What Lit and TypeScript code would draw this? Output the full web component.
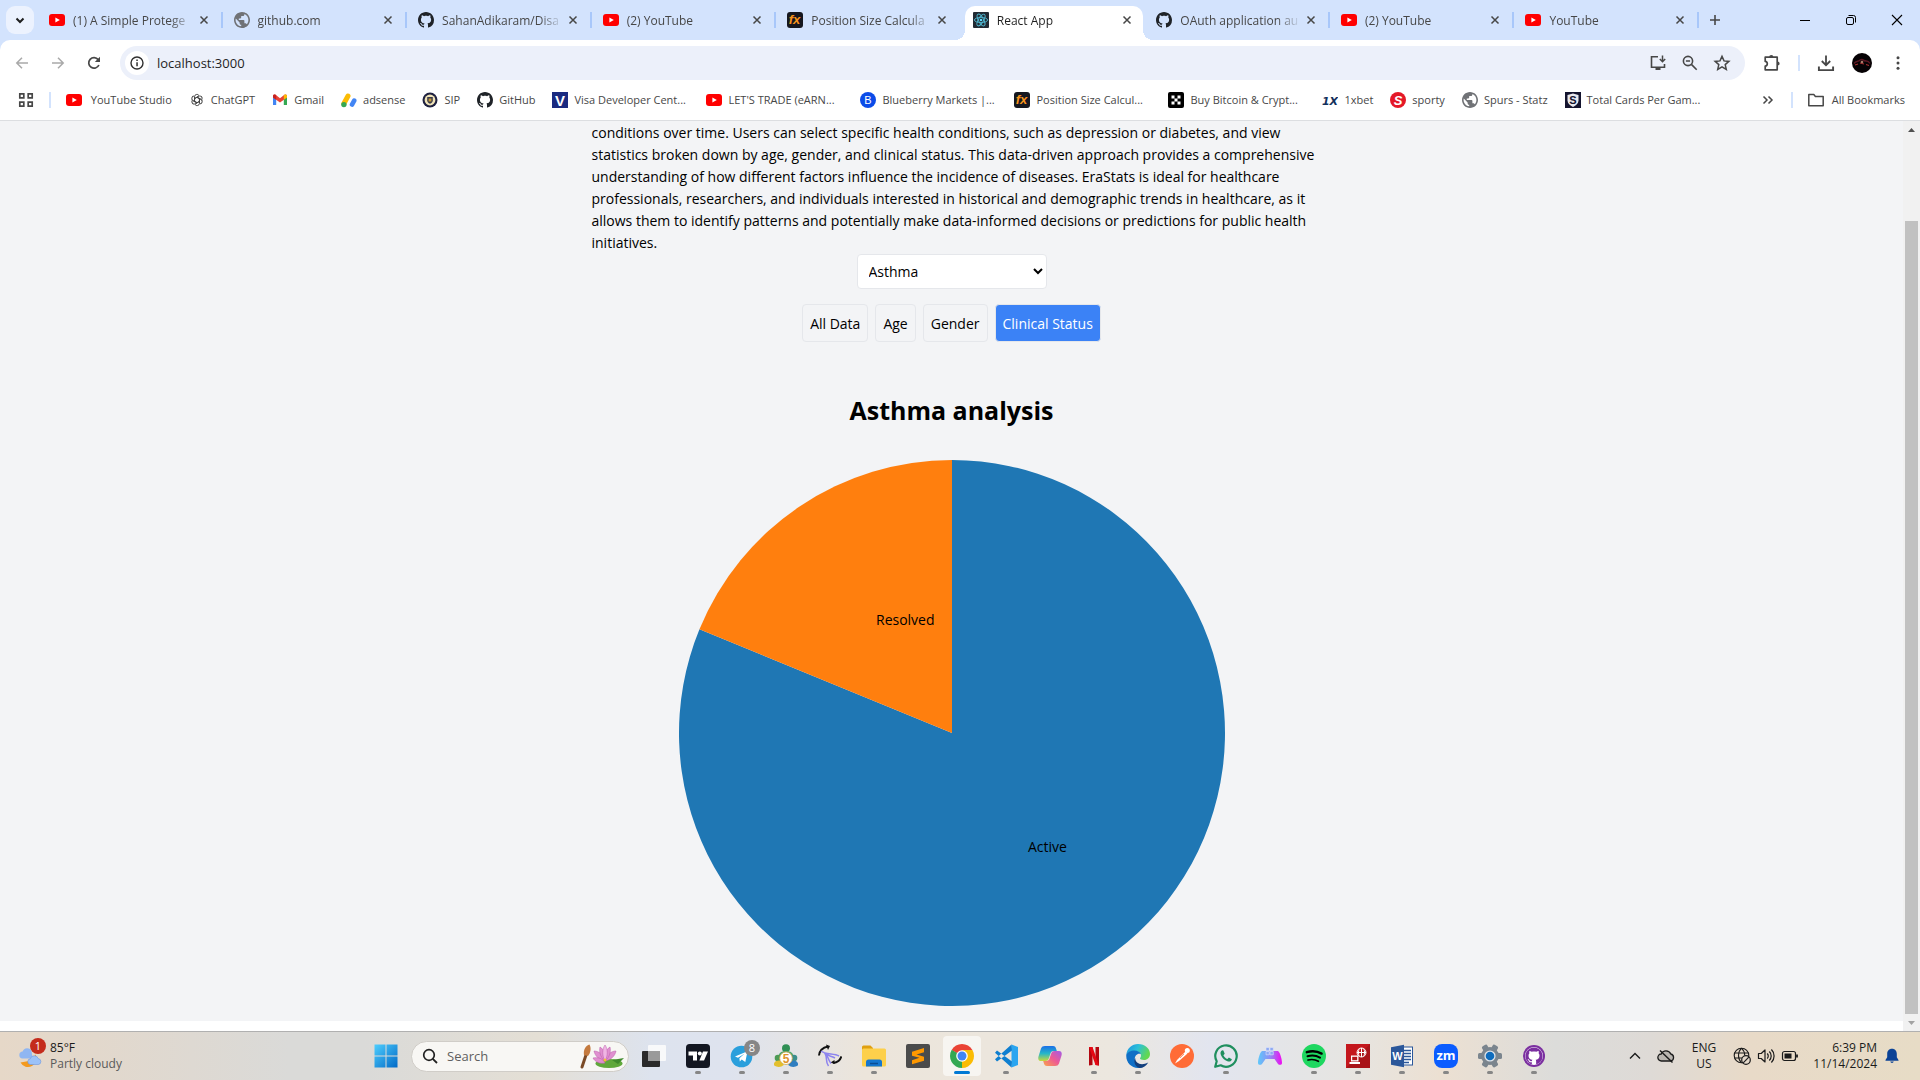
import { LitElement, html, svg, css, SVGTemplateResult } from "lit";
import { customElement, property, state } from "lit/decorators.js";
import { classMap } from "lit/directives/class-map.js";

type Art = { box: number; art: SVGTemplateResult };

const OCTOCAT =
  "M8 0C3.58 0 0 3.58 0 8c0 3.54 2.29 6.53 5.47 7.59.4.07.55-.17.55-.38 0-.19-.01-.82-.01-1.49-2.01.37-2.53-.49-2.69-.94-.09-.23-.48-.94-.82-1.13-.28-.15-.68-.52-.01-.53.63-.01 1.08.58 1.23.82.72 1.21 1.87.87 2.33.66.07-.52.28-.87.51-1.07-1.78-.2-3.64-.89-3.64-3.95 0-.87.31-1.59.82-2.15-.08-.2-.36-1.02.08-2.12 0 0 .67-.21 2.2.82.64-.18 1.32-.27 2-.27.68 0 1.36.09 2 .27 1.53-1.04 2.2-.82 2.2-.82.44 1.1.16 1.92.08 2.12.51.56.82 1.27.82 2.15 0 3.07-1.87 3.75-3.65 3.95.29.25.54.73.54 1.48 0 1.07-.01 1.93-.01 2.2 0 .21.15.46.55.38A8.013 8.013 0 0016 8c0-4.42-3.58-8-8-8z";

const stroke = (d: string, width = 1.6, color = "#474747") =>
  svg`<path d=${d} fill="none" stroke=${color} stroke-width=${width}/>`;

const ICONS: Record<string, Art> = {
  /* ---- site icons ---- */
  youtube: {
    box: 16,
    art: svg`<rect x="0" y="2" width="16" height="12" rx="3" fill="#f00"/><path d="M6.4 5.4v5.2L10.8 8z" fill="#fff"/>`,
  },
  globe: {
    box: 20,
    art: svg`<path transform="translate(-2 -2)" fill="#707276" d="M12 2C6.48 2 2 6.48 2 12s4.48 10 10 10 10-4.48 10-10S17.52 2 12 2zm-1 17.93c-3.95-.49-7-3.85-7-7.93 0-.62.08-1.21.21-1.79L9 15v1c0 1.1.9 2 2 2v1.93zm6.9-2.54c-.26-.81-1-1.39-1.9-1.39h-1v-3c0-.55-.45-1-1-1H8v-2h2c.55 0 1-.45 1-1V7h2c1.1 0 2-.9 2-2v-.41c2.93 1.19 5 4.06 5 7.41 0 2.08-.8 3.97-2.1 5.390z"/>`,
  },
  github: { box: 16, art: svg`<path d=${OCTOCAT} fill="#1f2328"/>` },
  fx: {
    box: 16,
    art: svg`<rect width="16" height="16" rx="3" fill="#15171f"/><text x="7.500" y="12" text-anchor="middle" font-family="Liberation Sans, sans-serif" font-style="italic" font-weight="700" font-size="13" fill="#f7941d">fx</text>`,
  },
  react: {
    box: 16,
    art: svg`<rect width="16" height="16" rx="1" fill="#222a33"/><g fill="none" stroke="#4fb7d0" stroke-width=".9"><ellipse cx="8" cy="8" rx="6.6" ry="2.6"/><ellipse cx="8" cy="8" rx="6.6" ry="2.6" transform="rotate(60 8 8)"/><ellipse cx="8" cy="8" rx="6.6" ry="2.6" transform="rotate(120 8 8)"/></g><circle cx="8" cy="8" r="1.3" fill="#61dafb"/>`,
  },
  openai: {
    box: 18,
    art: svg`<g fill="none" stroke="#444" stroke-width="1.100" transform="translate(1 1)">${[0, 60, 120, 180, 240, 300].map(
      (a) => svg`<path transform="rotate(${a} 8 8)" d="M5.2 9.6V4.3A2.7 2.7 0 0 1 10.2 3M5.4 6.4l3.8-2.2"/>`
    )}</g>`,
  },
  gmail: {
    box: 16,
    art: svg`<path d="M1 3.8v9.2h3.2V7.2z" fill="#4285f4"/><path d="M15 3.8v9.2h-3.2V7.2z" fill="#34a853"/><path d="M1 4c0-1.6 1.6-2 2.6-1.2L8 6.2l4.4-3.4C13.4 2 15 2.4 15 4v1.4L8 10.6 1 5.4z" fill="#ea4335"/><path d="M11.8 3.3l.6-.5C13.4 2 15 2.4 15 4v1.4l-3.2 2.4z" fill="#fbbc04"/><path d="M1 4c0-1.6 1.6-2 2.6-1.2l.6.5v4.5L1 5.4z" fill="#c5221f"/>`,
  },
  adsense: {
    box: 16,
    art: svg`<path d="M2.9 11.500L7 4" stroke="#fbbc04" stroke-width="5" stroke-linecap="round"/><path d="M11 12.6l2.2-4" stroke="#4285f4" stroke-width="4.6" stroke-linecap="round"/><circle cx="2.9" cy="12.6" r="2.7" fill="#34a853"/>`,
  },
  sip: {
    box: 16,
    art: svg`<circle cx="8" cy="8" r="7.5" fill="#1e2140"/><circle cx="8" cy="8" r="5.4" fill="#efe3b8"/><path d="M5.2 5h5.6v3.5c0 1.6-1.4 2.6-2.8 3.2-1.4-.6-2.8-1.6-2.8-3.2z" fill="#3a3a4a"/><path d="M6.6 6.5h2.8v3H6.6z" fill="#c59a3b"/>`,
  },
  visa: {
    box: 16,
    art: svg`<rect width="16" height="16" fill="#1a2a80"/><text x="8" y="13.5" text-anchor="middle" font-family="Liberation Sans, sans-serif" font-weight="700" font-size="15" fill="#fff">V</text>`,
  },
  blueberry: {
    box: 16,
    art: svg`<circle cx="8" cy="8" r="8" fill="#0b4be8"/><text x="8" y="12" text-anchor="middle" font-family="Liberation Sans, sans-serif" font-size="11" fill="#fff">B</text>`,
  },
  okx: {
    box: 16,
    art: svg`<rect width="16" height="16" rx="2" fill="#000"/><path d="M3.5 3.5h3v3h-3zM9.5 3.5h3v3h-3zM6.5 6.5h3v3h-3zM3.5 9.5h3v3h-3zM9.5 9.5h3v3h-3z" fill="#fff"/>`,
  },
  onex: {
    box: 16,
    art: svg`<text x="8" y="12.5" text-anchor="middle" font-family="DejaVu Sans, sans-serif" font-style="italic" font-weight="700" font-size="11" fill="#12305c">1X</text>`,
  },
  sporty: {
    box: 16,
    art: svg`<circle cx="8" cy="8" r="8" fill="#e41827"/><text x="8" y="12.5" text-anchor="middle" font-family="Liberation Sans, sans-serif" font-style="italic" font-weight="700" font-size="13" fill="#fff">S</text>`,
  },
  total: {
    box: 16,
    art: svg`<rect width="16" height="16" fill="#14142e"/><path d="M8 1.5l5.5 1.5v5.5c0 3-2.5 5-5.5 6.5-3-1.5-5.5-3.5-5.5-6.5V3z" fill="#e9e9ee"/><text x="8" y="12" text-anchor="middle" font-family="Liberation Sans, sans-serif" font-weight="700" font-size="11" fill="#14142e">S</text>`,
  },

  /* ---- browser controls ---- */
  caret: { box: 16, art: stroke("M4.5 6.5L8 10l3.5-3.5", 2, "#1f1f1f") },
  close: { box: 16, art: stroke("M4.5 4.5l7 7M11.5 4.5l-7 7", 1.5) },
  plus: { box: 16, art: stroke("M8 3v10M3 8h10", 1.6) },
  minimize: { box: 16, art: stroke("M3 8.5h10", 1, "#000") },
  restore: {
    box: 16,
    art: svg`<rect x="3.5" y="5.5" width="7" height="7" rx="1.5" fill="none" stroke="#000"/><path d="M5.5 3.5h5a2 2 0 0 1 2 2v5" fill="none" stroke="#000"/>`,
  },
  winclose: { box: 16, art: stroke("M3 3l10 10M13 3L3 13", 1.1, "#000") },
  back: { box: 16, art: stroke("M14 8H3M8 2.8L2.8 8 8 13.2", 1.5, "#a9a9a9") },
  forward: { box: 16, art: stroke("M2 8h11M8 2.8L13.2 8 8 13.2", 1.5, "#a9a9a9") },
  reload: {
    box: 16,
    art: svg`${stroke("M12.9 10A5.3 5.3 0 1 1 12.2 4.6L13.2 6", 1.7)}<path d="M14 1.8v5.2H8.8z" fill="#474747"/>`,
  },
  info: {
    box: 16,
    art: svg`<circle cx="8" cy="8" r="6" fill="none" stroke="#303030" stroke-width="1.4"/><path d="M7.3 7.2h1.5v4H7.3zM7.3 4.6h1.5v1.5H7.3z" fill="#303030"/>`,
  },
  install: {
    box: 18,
    art: svg`${stroke("M9 2.8H2.5v10.4h13V10", 1.6)}<path d="M6.5 13h5v3h-5z" fill="#474747"/>${stroke("M13.5 1.5v6M10.8 5l2.7 2.7L16.2 5", 1.5)}`,
  },
  zoomout: {
    box: 18,
    art: svg`<circle cx="7" cy="7" r="4.6" fill="none" stroke="#474747" stroke-width="1.6"/>${stroke("M10.4 10.4l5.3 5.3M4.9 7h4.2", 1.6)}`,
  },
  star: {
    box: 18,
    art: svg`<path d="M9 2.4l2 4.5 4.9.5-3.7 3.2 1.1 4.8L9 12.9l-4.3 2.5 1.1-4.8-3.7-3.2L7 6.9z" fill="none" stroke="#474747" stroke-width="1.5"/>`,
  },
  puzzle: {
    box: 18,
    art: svg`<path d="M2.2 3.2h12v12.600H2.200v-3.600c2.800-.2 2.800-4.600 0-4.800z" fill="none" stroke="#474747" stroke-width="1.7" stroke-linejoin="round"/><path d="M6.200 3a2.100 2.100 0 0 1 4.200 0zM14.500 7.400a2.100 2.100 0 0 1 0 4.200z" fill="#474747"/>`,
  },
  download: { box: 18, art: svg`${stroke("M9 1.5v9.5M4.8 7L9 11.2 13.2 7", 1.8)}${stroke("M1.9 12.5v3.6h14.2v-3.6", 1.9)}` },
  avatar: {
    box: 20,
    art: svg`<circle cx="10" cy="10" r="10" fill="#060204"/><path d="M2 10.5c2-3 5-1.500 6-3.5 1.500-1 3-.5 4 .5 2 1.200 4-.5 6 3" fill="none" stroke="#5a1722" stroke-width="1.500"/><path d="M3 12l3-1M14 11.500l3 1M8 10l4 1" stroke="#a83030" stroke-width="1.100"/><circle cx="10" cy="9" r="1.300" fill="#a77a68"/>`,
  },
  dots: {
    box: 16,
    art: svg`<circle cx="8" cy="2.8" r="1.5" fill="#474747"/><circle cx="8" cy="8" r="1.5" fill="#474747"/><circle cx="8" cy="13.2" r="1.5" fill="#474747"/>`,
  },
  apps: {
    box: 16,
    art: svg`<path d="M1.8 1.8h4v4h-4zM10.2 1.8h4v4h-4zM1.8 10.2h4v4h-4zM10.2 10.2h4v4h-4z" fill="none" stroke="#474747" stroke-width="1.7"/>`,
  },
  more: { box: 16, art: stroke("M3.5 4.5L7 8l-3.5 3.5M8.5 4.5L12 8l-3.5 3.5", 1.5) },
  folder: {
    box: 16,
    art: svg`<path d="M.8 2.6h5l1.6 1.900h7.800v9.300H.8z" fill="none" stroke="#474747" stroke-width="1.5" stroke-linejoin="round"/>`,
  },

  /* ---- taskbar ---- */
  weather: {
    box: 26,
    art: svg`<path d="M2.500 19.500a8 8 0 1 0 15-8l-4 6z" fill="#f49a1e"/><path d="M4 15.500a3.500 3.500 0 0 1 .6-6.900 4.800 4.800 0 0 1 9-.3l1 7.200z" fill="#8fb6f2"/><path d="M12 21.500a2.900 2.900 0 0 1 .3-5.700 4.200 4.200 0 0 1 8-.2 3 3 0 0 1 .2 5.900z" fill="#9cc2f8" stroke="#6d97e0" stroke-width=".6"/>`,
  },
  windows: {
    box: 24,
    art: svg`<defs><linearGradient id="w" gradientUnits="userSpaceOnUse" x1="0" y1="0" x2="24" y2="24"><stop offset="0" stop-color="#4fd0ff"/><stop offset="1" stop-color="#0067c5"/></linearGradient></defs><path d="M.5.5h11v11H.5zM12.5.5h11v11h-11zM.5 12.5h11v11H.5zM12.5 12.5h11v11h-11z" fill="url(#w)"/>`,
  },
  search: { box: 16, art: svg`<circle cx="7" cy="7" r="5.3" fill="none" stroke="#202020" stroke-width="1.7"/>${stroke("M10.8 10.8l4.2 4.2", 1.8, "#202020")}` },
  lotus: {
    box: 46,
    art: svg`<path d="M4 34L8 22" stroke="#7a4a26" stroke-width="3" stroke-linecap="round"/><path d="M6 22c-1-5 2-10 5.500-10.500C13.500 15 12.500 20 10 23z" fill="#c47a3e"/><ellipse cx="31" cy="30.500" rx="13.500" ry="4.500" fill="#5fa83a"/><path d="M34 27l12-2-6 6z" fill="#3f8a2c"/><g fill="#e08fd0" stroke="#b85aa8" stroke-width=".5"><path d="M27 28c-6-1-10-5-11-10 5 0 10 4 11 10z"/><path d="M27 28c6-1 10-5 11-10-5 0-10 4-11 10z"/><path d="M27 28c-5-4-6-10-5-14 5 3 6 9 5 14z"/><path d="M27 28c5-4 6-10 5-14-5 3-6 9-5 14z"/><path d="M27 28c-3-5-3-12 0-16 3 4 3 11 0 16z" fill="#f0b5e4"/><path d="M27 30c-5 1-10-1-12-5 4-1 10 0 12 5z"/></g><circle cx="27" cy="27" r="1.500" fill="#f2c230"/>`,
  },
  taskview: {
    box: 24,
    art: svg`<rect x="0" y="7" width="18" height="16" rx="1" fill="#2a2a2a"/><rect x="6" y="1" width="18" height="16" rx="1" fill="#fbfbfb" opacity=".9"/><rect x="6" y="7" width="12" height="10" fill="#9a9a9a"/>`,
  },
  tradingview: {
    box: 24,
    art: svg`<rect width="24" height="24" rx="3.5" fill="#131722"/><path d="M2.5 7.5h8.5v9H7v-5H2.5z" fill="#fff"/><circle cx="13.8" cy="9.5" r="2" fill="#fff"/><path d="M17 7.5h5l-4 9h-4.6z" fill="#fff"/>`,
  },
  telegram: {
    box: 24,
    art: svg`<circle cx="11.5" cy="12.5" r="10.8" fill="#2a9fdc"/><path d="M5 12.5L17.5 7.3l-2.2 10.8-3.6-2.6-1.9 1.9-.4-3.2 5-4.5-6.4 4z" fill="#fff"/>`,
  },
  money: {
    box: 24,
    art: svg`<circle cx="12" cy="4.200" r="4" fill="#2f8f55"/><path d="M4.500 13c0-4 3-6 7.500-6s7.500 2 7.500 6v2h-15z" fill="#4aa56c"/><circle cx="4" cy="14" r="3.300" fill="#4c9a55"/><path d="M-.2 21c0-3 2-4.500 5-4.500s5 1.500 5 4.500c-3 2.500-7 2.500-10 0z" fill="#e3bf2c"/><circle cx="20" cy="14" r="3.300" fill="#3b8f8c"/><path d="M14.200 21c0-3 2-4.500 5-4.500s5 1.500 5 4.500c-3 2.500-7 2.500-10 0z" fill="#2f7ec0"/><circle cx="12" cy="14.200" r="6.300" fill="#fff" stroke="#d0a545" stroke-width=".8"/><text x="12" y="18.500" text-anchor="middle" font-family="Liberation Sans, sans-serif" font-weight="700" font-size="12" fill="#e0942a">5</text>`,
  },
  swirl: {
    box: 24,
    art: svg`<path d="M1 11.500C1.500 7 5 3.500 10 2.500" fill="none" stroke="#111" stroke-width="2"/><path d="M8 .5l4 1.500L10 6z" fill="#111"/><path d="M23.200 12.500c-.5 3.500-4 6-8 6.500" fill="none" stroke="#111" stroke-width="2"/><path d="M16.500 16l-4 2.500 4 1.500z" fill="#111"/><path d="M3 7c5 4 13 2 18 5M5.500 8c5 3.500 1 9 5 14M6 8.500c5 3.500 3 6 7 11M8 9.500c3 3 4 2 9 4.500" fill="none" stroke="#8d84ee" stroke-width="1.500"/>`,
  },
  explorer: {
    box: 24,
    art: svg`<path d="M0 3a1.500 1.500 0 0 1 1.500-1.500h7L11 4v4H0z" fill="#e0a010"/><rect x="0" y="4.500" width="24" height="18" rx="1.500" fill="#fdd04b"/><path d="M4 22.500V18a2.500 2.500 0 0 1 2.500-2.500h11A2.500 2.500 0 0 1 20 18v4.500z" fill="#1577cf"/><path d="M8 19.500h8" stroke="#0b4e94" stroke-width="1.500"/>`,
  },
  sublime: {
    box: 24,
    art: svg`<rect width="24" height="24" rx="2" fill="#4b4b4b"/><path d="M6 7.800L18 4v4.200l-7.500 2.300L18 12.800v3.900L6 20.300v-4.100l7.500-2.400L6 11.800z" fill="#ff9800"/>`,
  },
  chrome: {
    box: 24,
    art: svg`<path d="M12 12L1.61 6A12 12 0 0 1 22.39 6z" fill="#ea4335"/><path d="M12 12L22.39 6A12 12 0 0 1 12 24z" fill="#fbbc04"/><path d="M12 12V24A12 12 0 0 1 1.61 6z" fill="#34a853"/><path d="M12 6h10.390L17.500 14z" fill="#fbbc04"/><path d="M1.610 6l5.200 9L12 12z" fill="#34a853"/><path d="M12 24l5.200-9L12 12z" fill="#fbbc04"/><circle cx="12" cy="12" r="5.800" fill="#fff"/><circle cx="12" cy="12" r="4.500" fill="#4285f4"/>`,
  },
  vscode: {
    box: 24,
    art: svg`<path d="M17.500.5L24 3v18l-6.500 2.500z" fill="#2aa5f0"/><path d="M17.500.5L1 15.200l2 2.300L18 6.500zM1 8.800l2-2.300L18 17.500l-.5 6z" fill="#0f7fd0"/>`,
  },
  copilot: {
    box: 24,
    art: svg`<defs><linearGradient id="ca" x1="0" y1="0" x2="0" y2="1"><stop offset="0" stop-color="#1a6fe8"/><stop offset=".5" stop-color="#27b6c9"/><stop offset="1" stop-color="#c9d93a"/></linearGradient><linearGradient id="cb" x1="1" y1="0" x2="0" y2="1"><stop offset="0" stop-color="#a35be8"/><stop offset=".5" stop-color="#ee5a94"/><stop offset="1" stop-color="#f9a54a"/></linearGradient></defs><path d="M7 2h8c2 0 2.6 1 3.2 3l.6 2h-3c-2 0-3 1-3.5 3L11 14c-.6 2-1.5 3-3.5 3H3C.6 17-.2 15 .5 12.5l2.5-8C3.6 2.8 5 2 7 2z" fill="url(#ca)"/><path d="M17 22H9c-2 0-2.6-1-3.2-3l-.6-2h3c2 0 3-1 3.5-3L13 10c.6-2 1.5-3 3.5-3H21c2.4 0 3.2 2 2.5 4.5l-2.5 8c-.6 1.7-2 2.5-4 2.5z" fill="url(#cb)"/>`,
  },
  netflix: {
    box: 24,
    art: svg`<path d="M7 3h3.5v18L7 21.5zM13.5 3H17v18.5l-3.5-.5z" fill="#b20710"/><path d="M7 3h3.5L17 21.5l-3.5-.5z" fill="#e50914"/>`,
  },
  edge: {
    box: 24,
    art: svg`<defs><linearGradient id="ea" x1="0" y1="0" x2="1" y2=".4"><stop offset="0" stop-color="#1a8fe0"/><stop offset=".5" stop-color="#2cc0d8"/><stop offset="1" stop-color="#62d850"/></linearGradient></defs><path d="M.3 11C1 4 6 0 12 0c7 0 12 4.500 12 10 0 3.500-2.500 6-6 6-2.500 0-4-.8-4-1.500s1-1.200 1-3C15 9 12.500 7 9 7 4.500 7 1 9.500.3 11z" fill="url(#ea)"/><path d="M.3 11C1 8.500 4.500 6.500 8.500 6.500c3 0 5.500 1.500 6.500 3.500-5-1.500-8 4-5 9 1.500 2.500 4 3.800 6.500 4-1.300.6-2.800 1-4.500 1C5 24-.3 18 .3 11z" fill="#0f6fc6"/><path d="M9.200 14c0 5 5.500 8.300 13 4.500C20.500 22 17 24 13.500 24 8.500 22.500 7.500 17 9.200 14z" fill="#123f7d"/>`,
  },
  postman: {
    box: 24,
    art: svg`<circle cx="12" cy="12" r="12" fill="#ff6c37"/><path d="M5 19.500l2-3.500 8.500-8.500 2 2L9 17z" fill="#fff"/><circle cx="17.300" cy="6.500" r="2.500" fill="#fff"/><path d="M10 14l4-4" stroke="#ff6c37" stroke-width=".7"/>`,
  },
  whatsapp: {
    box: 24,
    art: svg`<path d="M1.200 22.800l1.500-5.500a10.700 10.700 0 1 1 4 4z" fill="none" stroke="#1f8f5f" stroke-width="2.200" stroke-linejoin="round"/><path d="M8.300 6.300c-1.800.8-2.300 2.700-1.300 4.900 1.300 2.800 3.600 5 6.400 6 2.300.8 4-.1 4.500-2l-3-1.700-1.500 1.600c-1.800-.8-3.200-2.100-4-3.900l1.300-1.500-1.300-3.200z" fill="#1f8f5f"/>`,
  },
  gamepad: {
    box: 24,
    art: svg`<defs><linearGradient id="gp" x1="0" y1="0" x2="1" y2="0"><stop offset="0" stop-color="#5fc8fa"/><stop offset=".5" stop-color="#8f8df5"/><stop offset="1" stop-color="#f00af0"/></linearGradient></defs><path d="M4 7h16c2 1 4 8 4 12 0 2-2.500 2.500-4 1l-3.500-5h-9L4 20c-1.500 1.500-4 1-4-1C0 15 2 8 4 7z" fill="url(#gp)"/><path d="M8 3.500h3.300v3.300H8zM12 3.500h3.300v3.300H12zM8 7.500h3.300v3.300H8zM12 7.500h3.300v3.300H12z" fill="#8ea9f3" stroke="#dfe6fa" stroke-width=".6"/>`,
  },
  spotify: {
    box: 24,
    art: svg`<circle cx="12" cy="12" r="12" fill="#1ed760"/><g fill="none" stroke="#000" stroke-linecap="round"><path d="M4.800 8.200c5-1.500 10.600-1 14.800 1.400" stroke-width="2.400"/><path d="M5.500 12.200c4.400-1.200 8.900-.7 12.500 1.400" stroke-width="2"/><path d="M6 16c3.600-.9 7.300-.5 10.400 1.300" stroke-width="1.700"/></g>`,
  },
  remote: {
    box: 24,
    art: svg`<rect width="24" height="24" fill="#c4161c"/><path d="M24 0v24H0z" fill="#8e0f14" opacity=".5"/><g fill="none" stroke="#fff" stroke-width="1"><circle cx="15.500" cy="8.500" r="4.500"/><path d="M11 8.500h9M15.500 4v9M13.200 4.800c-1 2.500-1 5 0 7.400M17.800 4.800c1 2.500 1 5 0 7.400"/></g><path d="M5 11.500h7.500v6H5zM3.500 18h10.500v2H3.500z" fill="#fff"/><path d="M6.200 12.800h5v3.400h-5z" fill="#b51419"/>`,
  },
  word: {
    box: 24,
    art: svg`<rect x="12" y="3" width="10.500" height="18" fill="#fff" stroke="#2b579a"/><path d="M14 6.500h7M14 9.500h7M14 12.500h7M14 15.500h7M14 18.500h5" stroke="#2b579a" stroke-width="1.300"/><path d="M1 3.200L14 .8v22.400L1 20.800z" fill="#2b579a"/><text x="7.500" y="16" text-anchor="middle" font-family="Liberation Sans, sans-serif" font-weight="700" font-size="11" fill="#fff">W</text>`,
  },
  zoomapp: {
    box: 24,
    art: svg`<rect width="24" height="24" rx="8" fill="#0b5cff"/><text x="12" y="16" text-anchor="middle" font-family="Open Sans, sans-serif" font-weight="700" font-size="13" fill="#fff">zm</text>`,
  },
  settings: {
    box: 24,
    art: svg`<g fill="#7b858e">${[30, 90, 150].map((a) => svg`<rect x="9" y="0" width="6" height="24" rx="1.5" transform="rotate(${a} 12 12)"/>`)}<circle cx="12" cy="12" r="9"/></g><circle cx="12" cy="12" r="5.600" fill="#dfe5ea"/><circle cx="12" cy="12" r="4.300" fill="#0f6cbd"/>`,
  },
  ghdesktop: {
    box: 24,
    art: svg`<circle cx="12" cy="12" r="11" fill="#7b2fa0"/><circle cx="12" cy="12" r="9" fill="#fff"/><path transform="translate(3.400 3.400) scale(1.075)" d=${OCTOCAT} fill="#7b2fa0"/>`,
  },
  up: { box: 16, art: stroke("M3 10.5l5-5 5 5", 1.4, "#1b1b1b") },
  cloudoff: {
    box: 18,
    art: svg`<path d="M4.500 14a3.500 3.500 0 0 1-.3-7 5.200 5.200 0 0 1 9.600 0 3.600 3.600 0 0 1 0 7z" fill="#b9b5b0" stroke="#1b1b1b" stroke-width="1.300"/><path d="M3 3.500l12.500 12" stroke="#1b1b1b" stroke-width="1.500"/>`,
  },
  netoff: {
    box: 18,
    art: svg`<g fill="none" stroke="#1b1b1b" stroke-width="1.100"><circle cx="8.500" cy="8.500" r="7.300"/><path d="M1.500 6h14M1.500 11h8M8.500 1.200c-4 4-4 10.600 0 14.600M8.500 1.200c2.200 2.100 3.200 4.500 3.200 7"/></g><circle cx="13" cy="13" r="4.300" fill="#e4d8ca" stroke="#1b1b1b" stroke-width="1.200"/><path d="M10.200 15.800l5.600-5.600" stroke="#1b1b1b" stroke-width="1.200"/>`,
  },
  volume: {
    box: 18,
    art: svg`<g fill="none" stroke="#1b1b1b" stroke-width="1.200" stroke-linejoin="round"><path d="M1.500 6.500h2.700L8 3v12l-3.800-3.500H1.500z"/><path d="M10.200 6.500a3.500 3.500 0 0 1 0 5M12.300 4.500a6.300 6.300 0 0 1 0 9M14.400 2.500a9.200 9.200 0 0 1 0 13"/></g>`,
  },
  battery: {
    box: 18,
    art: svg`<rect x="1.500" y="4.500" width="13" height="9" rx="2" fill="none" stroke="#1b1b1b" stroke-width="1.200"/><rect x="3.500" y="6.500" width="7" height="5" fill="#1b1b1b"/><path d="M16 7.500v3" stroke="#1b1b1b" stroke-width="1.800"/>`,
  },
  bell: { box: 16, art: svg`<path d="M8 .8c-3 0-4.800 2.200-4.800 5v3.500L1.500 12v.8h13V12l-1.700-2.700V5.800c0-2.800-1.800-5-4.800-5zM6.200 13.600a1.900 1.900 0 0 0 3.600 0z" fill="#0b4296"/>` },
};

const icon = (name: string, size = 16) => {
  const { box, art } = ICONS[name];
  return html`<svg width=${size} height=${size} viewBox="0 0 ${box} ${box}" aria-hidden="true">${art}</svg>`;
};

const base = css`
  * {
    box-sizing: border-box;
  }
  button {
    font: inherit;
    color: inherit;
    border: 0;
    background: none;
    padding: 0;
    margin: 0;
  }
  a {
    color: inherit;
    text-decoration: none;
  }
  svg {
    display: block;
    flex: none;
  }
`;

@customElement("browser-tabs")
export class BrowserTabs extends LitElement {
  static styles = [
    base,
    css`
      :host {
        display: flex;
        height: 40px;
        background: #d3e3fd;
        color: #474747;
        font-size: 12px;
      }
      .menu {
        display: grid;
        place-items: center;
        width: 28px;
        height: 28px;
        margin: 6px 4px 6px 6px;
        border-radius: 9px;
        background: #ecf2fe;
      }
      .strip {
        flex: 1;
        min-width: 0;
        display: grid;
        grid-auto-flow: column;
        grid-auto-columns: minmax(0, 1fr);
      }
      .tab {
        display: flex;
        align-items: center;
        gap: 2px;
        padding: 0 11px;
        height: 28px;
        margin-top: 6px;
        background: linear-gradient(#a8c7fa, #a8c7fa) right center / 2px 16px no-repeat;
      }
      .tab.plain {
        background: none;
      }
      .tab.active {
        color: #1f1f1f;
        height: 34px;
        padding: 0 8px 6px 8px;
        margin: 6px 2px 0 4px;
        position: relative;
        background: #fff;
        border-radius: 10px 10px 0 0;
      }
      .tab.active::before,
      .tab.active::after {
        content: "";
        position: absolute;
        bottom: 0;
        width: 10px;
        height: 10px;
      }
      .tab.active::before {
        right: 100%;
        background: radial-gradient(circle at 0 0, transparent 10px, #fff 10px);
      }
      .tab.active::after {
        left: 100%;
        background: radial-gradient(circle at 100% 0, transparent 10px, #fff 10px);
      }
      .pick {
        flex: 1;
        min-width: 0;
        display: flex;
        align-items: center;
        gap: 8px;
        text-align: left;
      }
      .title {
        flex: 1;
        overflow: hidden;
        white-space: nowrap;
        padding-top: 2px;
        line-height: 20px;
        mask-image: linear-gradient(to right, #000 calc(100% - 24px), transparent);
      }
      .new {
        width: 32px;
      }
      .new,
      .win {
        display: grid;
        place-items: center;
      }
      .win {
        width: 46px;
      }
      .gap {
        width: 51px;
      }
    `,
  ];

  private tabs = [
    ["youtube", "(1) A Simple Protege"],
    ["globe", "github.com"],
    ["github", "SahanAdikaram/Disa"],
    ["youtube", "(2) YouTube"],
    ["fx", "Position Size Calcula"],
    ["react", "React App"],
    ["github", "OAuth application au"],
    ["youtube", "(2) YouTube"],
    ["youtube", "YouTube"],
  ];
  @state() private active = 5;

  render() {
    return html`
      <button class="menu" aria-label="Search tabs">${icon("caret")}</button>
      <div class="strip">
        ${this.tabs.map(
          ([ico, title], i) => html`
            <div class=${classMap({ tab: true, active: i === this.active, plain: i === this.active - 1 })}>
              <button class="pick" @click=${() => (this.active = i)}>${icon(ico)}<span class="title">${title}</span></button>
              <button aria-label="Close tab">${icon("close")}</button>
            </div>
          `
        )}
      </div>
      <button class="new" aria-label="New tab">${icon("plus")}</button>
      <div class="gap"></div>
      <button class="win" aria-label="Minimize">${icon("minimize")}</button>
      <button class="win" aria-label="Restore">${icon("restore")}</button>
      <button class="win" aria-label="Close">${icon("winclose")}</button>
    `;
  }
}

@customElement("browser-toolbar")
export class BrowserToolbar extends LitElement {
  static styles = [
    base,
    css`
      :host {
        display: block;
        background: #d3e3fd;
      }
      .surface {
        background: #fff;
        border-radius: 10px 10px 0 0;
        border-bottom: 1px solid #dcdee1;
        color: #474747;
      }
      .bar {
        display: flex;
        align-items: center;
        height: 46px;
        padding: 0 4px;
      }
      .act {
        display: grid;
        place-items: center;
        width: 36px;
        height: 34px;
      }
      .omni {
        flex: 1;
        display: flex;
        align-items: center;
        height: 34px;
        margin: 0 9px 0 8px;
        padding: 0 7px 0 5px;
        border-radius: 17px;
        background: #ecf0fa;
      }
      .info {
        display: grid;
        place-items: center;
        width: 24px;
        height: 24px;
        border-radius: 50%;
        background: #fff;
      }
      .url {
        flex: 1;
        min-width: 0;
        border: 0;
        outline: 0;
        background: none;
        padding: 0 8px;
        font-family: inherit;
        font-size: 13px;
        color: #1f1f1f;
      }
      .omni .act {
        width: 32px;
      }
      .line {
        width: 2px;
        height: 16px;
        background: #d3e3fd;
      }
      .bar .line {
        margin: 0 8px;
      }
      .marks {
        display: flex;
        align-items: center;
        height: 34px;
        padding: 0 15px 6px 18px;
        font-size: 11px;
      }
      .marks > .line {
        margin: 0 15px;
      }
      .list {
        flex: 1;
        min-width: 0;
        display: flex;
        gap: 17px;
      }
      .mark {
        display: flex;
        align-items: center;
        gap: 6px;
        line-height: 18px;
        white-space: nowrap;
      }
      .mark.long {
        width: 137px;
      }
      .mark.all {
        gap: 8px;
      }
    `,
  ];

  private marks = [
    ["youtube", "\u00a0YouTube Studio"],
    ["openai", "ChatGPT"],
    ["gmail", "Gmail"],
    ["adsense", "adsense"],
    ["sip", "SIP"],
    ["github", "GitHub"],
    ["visa", "Visa Developer Cent..."],
    ["youtube", "LET'S TRADE (eARN..."],
    ["blueberry", "Blueberry Markets |..."],
    ["fx", "Position Size Calcul..."],
    ["okx", "Buy Bitcoin & Crypt..."],
    ["onex", "1xbet"],
    ["sporty", "sporty"],
    ["globe", "Spurs - Statz"],
    ["total", "Total Cards Per Gam..."],
  ];

  render() {
    const act = (name: string, label: string, size = 16) =>
      html`<button class="act" aria-label=${label}>${icon(name, size)}</button>`;
    return html`
      <div class="surface">
        <div class="bar">
          ${act("back", "Back")} ${act("forward", "Forward")} ${act("reload", "Reload")}
          <div class="omni">
            <button class="info" aria-label="Site information">${icon("info")}</button>
            <input class="url" aria-label="Address" value="localhost:3000" />
            ${act("install", "Install app", 18)} ${act("zoomout", "Zoom", 18)} ${act("star", "Bookmark", 18)}
          </div>
          ${act("puzzle", "Extensions", 18)}
          <span class="line"></span>
          ${act("download", "Downloads", 18)} ${act("avatar", "Profile", 20)} ${act("dots", "Menu")}
        </div>
        <div class="marks">
          <button aria-label="Apps">${icon("apps")}</button>
          <span class="line"></span>
          <div class="list">
            ${this.marks.map(
              ([ico, name]) =>
                html`<a href="#" class=${classMap({ mark: true, long: name.endsWith("...") })}>${icon(ico)}<span>${name}</span></a>`
            )}
          </div>
          <button aria-label="More bookmarks">${icon("more")}</button>
          <span class="line"></span>
          <button class="mark all">${icon("folder")}<span>All Bookmarks</span></button>
        </div>
      </div>
    `;
  }
}

@customElement("pie-chart")
export class PieChart extends LitElement {
  static styles = css`
    :host {
      display: block;
    }
    .pie {
      display: block;
      width: 546px;
      max-width: 100%;
    }
    .label {
      font-size: 14px;
      fill: #000;
    }
  `;

  @property({ attribute: false }) slices: { name: string; share: number; color: string }[] = [];

  render() {
    const r = 273;
    const at = (turn: number, dist: number) => {
      const a = turn * 2 * Math.PI;
      return [r + dist * Math.sin(a), r - dist * Math.cos(a)];
    };
    let turn = 0;
    const arcs = this.slices.map((s) => {
      const from = turn;
      turn += s.share;
      const [x1, y1] = at(from, r);
      const [x2, y2] = at(turn, r);
      const [lx, ly] = at((from + turn) / 2, r / 2);
      return { s, lx, ly, d: `M${r} ${r}L${x1} ${y1}A${r} ${r} 0 ${s.share > 0.5 ? 1 : 0} 1 ${x2} ${y2}Z` };
    });
    return html`
      <svg class="pie" viewBox="0 0 ${r * 2} ${r * 2}" role="img" aria-label="Share of cases by clinical status">
        ${arcs.map((a) => svg`<path d=${a.d} fill=${a.s.color}/>`)}
        ${arcs.map((a) => svg`<text class="label" x=${a.lx} y=${a.ly} dy=".4em">${a.s.name}</text>`)}
      </svg>
    `;
  }
}

@customElement("stats-page")
export class StatsPage extends LitElement {
  static styles = [
    base,
    css`
      :host {
        display: flex;
        min-height: 0;
        background: #fff;
      }
      .content {
        flex: 1;
        min-width: 0;
        align-self: flex-start;
        display: flex;
        flex-direction: column;
        align-items: center;
        padding-bottom: 15px;
        background: #f3f4f6;
        color: #000;
        font-size: 14px;
      }
      .about {
        width: 736px;
        max-width: 100%;
        margin: 0;
        padding: 1px 0 0 8px;
        line-height: 22px;
      }
      .condition {
        width: 190px;
        height: 35px;
        padding: 0 7px;
        border: 1px solid #e5e7eb;
        border-radius: 4px;
        background: #fff;
        color: #000;
        font: inherit;
      }
      .filters {
        display: flex;
        gap: 7px;
        margin-top: 15px;
      }
      .filter {
        height: 38px;
        padding: 0 7px;
        border: 1px solid #e5e7eb;
        border-radius: 4px;
      }
      .filter.on {
        background: #3b82f6;
        color: #fff;
      }
      .heading {
        margin: 50px 0 32px;
        font-size: 25px;
        line-height: 36px;
        font-weight: 700;
      }
      .scroll {
        display: flex;
        flex-direction: column;
        width: 17px;
        background: #f1f1f1;
      }
      .arrow {
        display: grid;
        place-items: center;
        height: 17px;
      }
      .track {
        flex: 1;
        padding: 83px 2px 0;
        display: flex;
      }
      .thumb {
        flex: 1;
        background: #c1c1c1;
      }
    `,
  ];

  private filters = ["All Data", "Age", "Gender", "Clinical Status"];
  @state() private selected = "Clinical Status";

  render() {
    return html`
      <main class="content">
        <p class="about">
          conditions over time. Users can select specific health conditions, such as depression or diabetes, and view
          statistics broken down by age, gender, and clinical status. This data-driven approach provides a comprehensive
          understanding of how different factors influence the incidence of diseases. EraStats is ideal for healthcare
          professionals, researchers, and individuals interested in historical and demographic trends in healthcare, as
          it allows them to identify patterns and potentially make data-informed decisions or predictions for public
          health initiatives.
        </p>
        <select class="condition" aria-label="Condition">
          <option>Asthma</option>
        </select>
        <div class="filters">
          ${this.filters.map(
            (f) =>
              html`<button class=${classMap({ filter: true, on: f === this.selected })} @click=${() => (this.selected = f)}>
                ${f}
              </button>`
          )}
        </div>
        <h1 class="heading">Asthma analysis</h1>
        <pie-chart
          .slices=${[
            { name: "Active", share: 0.812, color: "#1f77b4" },
            { name: "Resolved", share: 0.188, color: "#ff7f0e" },
          ]}
        ></pie-chart>
      </main>
      <div class="scroll" aria-hidden="true">
        <div class="arrow"><svg width="7" height="4" viewBox="0 0 7 4"><path d="M0 4L3.5 0 7 4z" fill="#505050" /></svg></div>
        <div class="track"><div class="thumb"></div></div>
        <div class="arrow"><svg width="7" height="4" viewBox="0 0 7 4"><path d="M0 0L3.5 4 7 0z" fill="#a3a3a3" /></svg></div>
      </div>
    `;
  }
}

@customElement("task-bar")
export class TaskBar extends LitElement {
  static styles = [
    base,
    css`
      :host {
        display: grid;
        grid-template-columns: 1fr auto 1fr;
        height: 48px;
        border-top: 1px solid #b0b0b0;
        background: linear-gradient(
          to right,
          #e6d8c8 0,
          #e2d8cc 5%,
          #dadad8 15%,
          #dadad8 19%,
          #e4dfd5 28%,
          #dde3ee 34%,
          #dee3ee 38%,
          #ece5db 45%,
          #ece7df 58%,
          #e2e5ef 63%,
          #e6e5e2 70%,
          #ece0d2 75%,
          #dcdcda 81%,
          #dedad6 86%,
          #e8dac8 91%,
          #e7dcc6 100%
        );
        color: #1b1b1b;
        font-size: 12px;
        line-height: 16px;
      }
      .weather {
        display: flex;
        align-items: center;
        gap: 6px;
        padding-left: 18px;
        text-align: left;
      }
      .pic {
        position: relative;
      }
      .badge {
        position: absolute;
        display: grid;
        place-items: center;
        width: 16px;
        height: 16px;
        border-radius: 50%;
        color: #fff;
        font-size: 11px;
      }
      .badge.red {
        top: -5px;
        left: 12px;
        background: #c42b1c;
      }
      .badge.grey {
        top: -4px;
        right: -6px;
        background: #868686;
      }
      .soft {
        color: #5a5a5a;
      }
      .center {
        display: flex;
        align-items: center;
      }
      .app {
        display: flex;
        flex-direction: column;
        align-items: center;
        width: 44px;
        padding-top: 8px;
        height: 40px;
        gap: 3px;
      }
      .app.front {
        width: 38px;
        margin: 0 3px;
        background: rgba(255, 255, 255, 0.6);
        border-radius: 4px;
      }
      .dash {
        width: 6px;
        height: 3px;
        border-radius: 2px;
        background: #868686;
      }
      .front .dash {
        width: 16px;
        background: #0078d4;
      }
      .find {
        display: flex;
        align-items: center;
        gap: 9px;
        width: 218px;
        height: 31px;
        margin: 0 3px;
        padding: 0 4px 0 10px;
        border-radius: 16px;
        background: #f8f7f4;
        border: 1px solid #d0cdc8;
      }
      .box {
        flex: 1;
        min-width: 0;
        border: 0;
        outline: 0;
        background: none;
        padding: 0;
        font-family: inherit;
        font-size: 13px;
      }
      .box::placeholder {
        color: #5f5f5f;
      }
      .tray {
        display: flex;
        align-items: center;
        justify-content: flex-end;
        padding-right: 20px;
      }
      .lang {
        width: 44px;
        text-align: center;
        margin-right: 7px;
      }
      .quick {
        display: flex;
        gap: 6px;
      }
      .chevron {
        margin-right: 14px;
      }
      .off {
        margin-right: 7px;
      }
      .clock {
        text-align: right;
        width: 78px;
        margin-right: 7px;
        white-space: nowrap;
      }
    `,
  ];

  private apps: [string, string, string?][] = [
    ["taskview", "Task view", "none"],
    ["tradingview", "TradingView"],
    ["telegram", "Telegram"],
    ["money", "Trading terminal"],
    ["swirl", "Sync tool"],
    ["explorer", "File Explorer"],
    ["sublime", "Sublime Text", "none"],
    ["chrome", "Google Chrome", "front"],
    ["vscode", "Visual Studio Code"],
    ["copilot", "Copilot", "none"],
    ["netflix", "Netflix"],
    ["edge", "Microsoft Edge"],
    ["postman", "Postman", "none"],
    ["whatsapp", "WhatsApp"],
    ["gamepad", "Game controller", "none"],
    ["spotify", "Spotify"],
    ["remote", "Remote access"],
    ["word", "Word"],
    ["zoomapp", "Zoom"],
    ["settings", "Settings"],
    ["ghdesktop", "GitHub Desktop"],
  ];

  render() {
    return html`
      <button class="weather">
        <span class="pic">${icon("weather", 26)}<span class="badge red">1</span></span>
        <span><div>85°F</div><div class="soft">Partly cloudy</div></span>
      </button>
      <div class="center">
        <button class="app" aria-label="Start">${icon("windows", 24)}</button>
        <label class="find">
          ${icon("search")}
          <input class="box" type="text" placeholder="Search" aria-label="Search" />
          ${icon("lotus", 46)}
        </label>
        ${this.apps.map(
          ([ico, name, mode]) => html`
            <button class=${classMap({ app: true, front: mode === "front" })} aria-label=${name}>
              <span class="pic">${icon(ico, 24)}${ico === "telegram" ? html`<span class="badge grey">8</span>` : ""}</span>
              ${mode === "none" ? "" : html`<span class="dash"></span>`}
            </button>
          `
        )}
      </div>
      <div class="tray">
        <button class="chevron" aria-label="Hidden icons">${icon("up")}</button>
        <button class="off" aria-label="Cloud storage">${icon("cloudoff", 18)}</button>
        <button class="lang">ENG<br />US</button>
        <button class="quick" aria-label="Network, volume, battery">
          ${icon("netoff", 18)}${icon("volume", 18)}${icon("battery", 18)}
        </button>
        <button class="clock">6:39 PM<br />11/14/2024</button>
        <button aria-label="Notifications">${icon("bell")}</button>
      </div>
    `;
  }
}

@customElement("app-root")
export class AppRoot extends LitElement {
  static styles = css`
    :host {
      display: flex;
      flex-direction: column;
      height: 100vh;
      overflow: hidden;
      font-family: "Open Sans", "Noto Sans", sans-serif;
    }
    .page {
      flex: 1;
    }
  `;

  render() {
    return html`
      <browser-tabs></browser-tabs>
      <browser-toolbar></browser-toolbar>
      <stats-page class="page"></stats-page>
      <task-bar></task-bar>
    `;
  }
}
